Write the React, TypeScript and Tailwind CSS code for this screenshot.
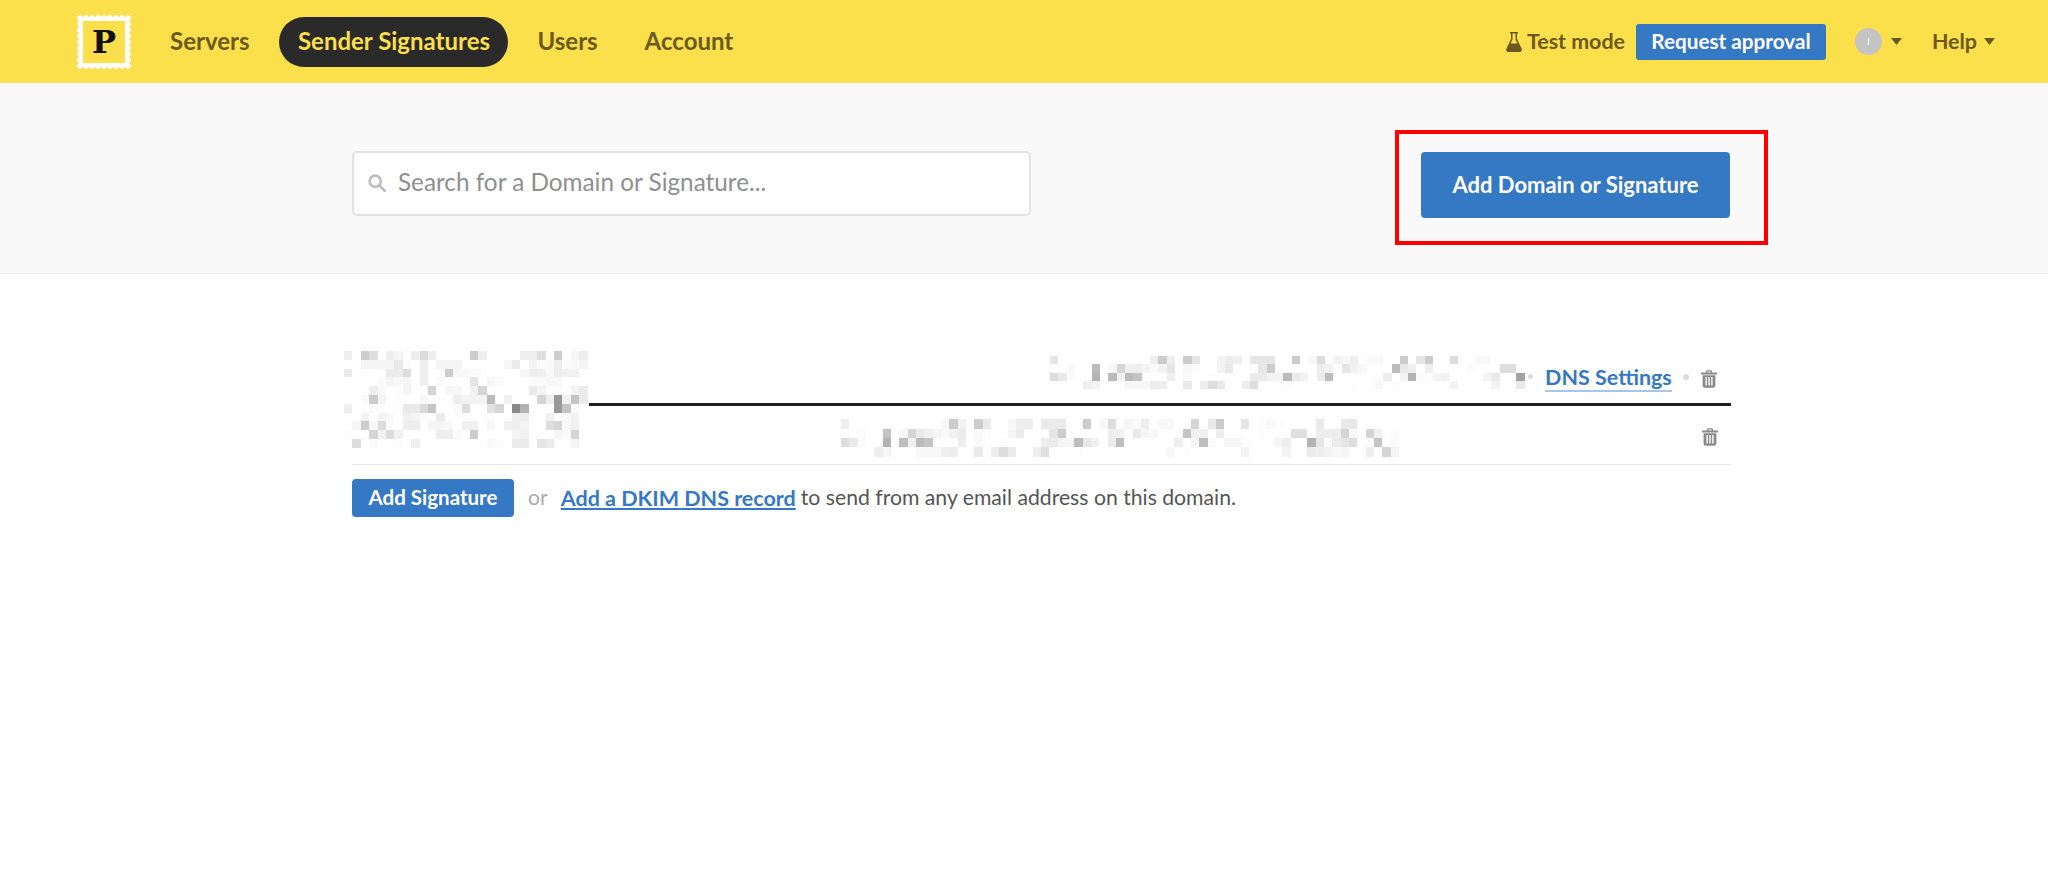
import React from "react";

type Rows = number[][];

const m3: Rows = [
  [0,1,2,3,3,2,5,1,6,.6,8,1,9,2,10,1,15,3,16,1,21,1,22,1,23,2,25,3,27,.5,28,1],
  [2,.6,3,.6,4,.6,5,.6,6,1.3,7,.1,9,.8,11,.6,12,.6,13,.6,19,.5,20,1.2,22,.7,23,.2,24,.3,25,1,26,.2,27,.3,28,.6],
  [0,1.2,2,.1,5,1.2,6,1.2,7,2,9,.8,12,3,13,.4,14,.4,15,.2,16,.2,21,.4,22,1,23,.9,24,.4,25,1,26,.8,27,.8],
  [4,.3,5,.7,6,.4,7,.6,9,.8,11,.3,15,1.5,17,.5,18,.2,22,.3,23,.3,24,.5,25,.4],
  [3,1,4,.4,7,.6,10,2.5,12,.5,13,.4,15,.8,16,2.5,22,1.2,23,.7,25,.2,27,.7,28,1.2],
  [2,.3,3,3,4,.6,6,.1,9,.4,13,1,14,.7,15,.7,16,.7,17,4,19,.8,23,2.5,24,1,25,6,26,.8,27,3.5,28,1.2],
  [0,1,3,.3,7,1.3,8,1.3,9,2.2,10,3.5,13,.3,14,2,17,1.7,18,2.5,20,7,21,4.5,25,6,26,3.5],
  [2,.7,4,.7,5,.4,7,.8,8,.6,9,.3,11,1.2,20,1,21,1,24,.9,26,.5,27,.7],
  [1,.6,2,3,3,.5,4,2,7,1,8,1,10,.6,11,.6,12,.4,14,.8,15,.8,17,.5,19,.8,20,1,21,.7,24,2,25,2.5,26,.4,27,.9],
  [0,.1,3,2.5,4,.8,5,2,6,.8,11,1,12,1,13,.3,15,3,20,.6,21,.8,25,.6,26,.3,27,2.5],
  [1,2,3,.2,5,.1,6,.1,8,.8,17,.3,18,.2,20,1.2,21,1.2,23,1.6,24,1.2,27,.6],
];

const m1: Rows = [
  [0,1.5,12,1,13,3,14,1,16,3,17,1.5,20,.7,21,1,22,1,24,1.5,25,1.5,26,1.5,29,3,31,.5,32,2,34,.7,35,.5,36,1,38,.3,39,.5,42,3,44,1.5,45,3,48,2,51,.5,52,.5],
  [2,.3,5,4,7,.5,8,2.5,9,1,10,1,11,.7,12,.3,13,.7,14,1.5,16,.5,17,.2,20,.7,21,1.3,25,1.5,26,3,32,1,33,.8,35,1.5,36,.8,37,.4,41,4,42,1.3,43,1,45,1,50,.2,54,2,55,2],
  [0,2,1,1.3,2,.2,5,4.5,7,4,8,.8,9,4,10,3.5,14,1,16,.4,19,.1,24,1.2,25,1.2,26,.7,27,.7,28,4,29,1.2,30,.8,32,1.2,33,4,40,1,42,.7,43,4.5,44,.3,46,.6,47,.7,52,.7,53,1.2,56,5.5],
  [4,1,5,.7,9,.5,10,.5,11,.5,12,1,13,1,16,1.3,18,1,19,2,20,1.3,23,1,24,2,28,.1,36,.1,39,.5,41,.1,48,.7,53,.7,56,1.3],
];

const m2: Rows = [
  [0,1,12,.4,13,3,14,.8,16,3,17,1.3,20,.5,21,1,22,1,24,1.3,25,1.2,26,1.2,29,3,31,.5,32,2,34,.6,35,.3,36,1,37,.1,38,.4,39,.4,42,2.5,44,1.3,45,3,48,1.5,50,.1,51,.3,52,.2,57,1.2,60,1.3,61,1.5],
  [2,.2,5,3.5,7,.5,8,2.5,9,1.2,10,.8,11,.6,12,.3,13,.8,14,1.2,16,.3,17,.2,20,.6,21,1.2,25,1.5,26,3,32,1,33,.8,35,1.3,36,.6,37,.4,41,3.5,42,.9,43,.8,45,1,50,.1,54,1.8,55,1.8,57,1,58,1,59,1,60,2.5,61,.4,63,2.5,64,.8,66,.2],
  [0,2,1,1.2,2,.2,5,4.5,7,3.8,8,.8,9,4,10,3.5,14,1,16,.3,19,.1,24,1,25,1.2,26,.6,27,.6,28,3.8,29,1.4,30,.8,32,1.2,33,3.8,40,1,42,.6,43,3.8,44,.2,46,.6,47,.6,52,.6,53,1,56,4.5,57,1.5,58,.3,59,1.2,60,1.5,61,2,64,3.5,66,.3],
  [4,1,5,.6,9,.4,10,.4,11,.4,12,.9,13,1,16,1.2,18,1,19,2,20,1.2,23,1,24,1.8,28,.1,39,.5,41,.1,48,.7,53,.7,56,1.2,57,1,58,.7,59,.5,60,.6,63,1,65,2.5,66,.6],
];

function Mosaic({ rows, cols, cw, ch, className }: { rows: Rows; cols: number; cw: number; ch: number; className?: string }) {
  const w = cols * cw;
  const h = rows.length * ch;
  const cells: React.ReactNode[] = [];
  rows.forEach((r, y) => {
    for (let i = 0; i < r.length; i += 2) {
      const g = Math.round(255 - r[i + 1] * 17);
      cells.push(
        <rect key={`${y}-${i}`} x={r[i] * cw} y={y * ch} width={cw} height={ch} fill={`rgb(${g},${g},${g})`} />
      );
    }
  });
  return (
    <svg width={w} height={h} viewBox={`0 0 ${w} ${h}`} className={className} shapeRendering="crispEdges">
      {cells}
    </svg>
  );
}

function Stamp() {
  const n = 9;
  const step = 54 / n;
  const dots: React.ReactNode[] = [];
  for (let i = 0; i <= n; i++) {
    const p = i * step;
    dots.push(<circle key={`t${i}`} cx={p} cy={0} r={1.7} fill="#fbdf4b" />);
    dots.push(<circle key={`b${i}`} cx={p} cy={54} r={1.7} fill="#fbdf4b" />);
    dots.push(<circle key={`l${i}`} cx={0} cy={p} r={1.7} fill="#fbdf4b" />);
    dots.push(<circle key={`r${i}`} cx={54} cy={p} r={1.7} fill="#fbdf4b" />);
  }
  return (
    <svg width="54" height="54" viewBox="0 0 54 54" className="block">
      <rect width="54" height="54" fill="#fff" />
      {dots}
      <rect x="6" y="6" width="42" height="42" fill="#fbdf4b" />
    </svg>
  );
}

function Caret({ className }: { className?: string }) {
  return (
    <svg width="11" height="7" viewBox="0 0 11 7" className={className}>
      <path d="M0 0h11L5.5 7z" fill="#6b5a1f" />
    </svg>
  );
}

function Trash({ className }: { className?: string }) {
  return (
    <svg width="18" height="18" viewBox="0 0 18 18" className={className} fill="#8a8a8a">
      <path d="M6 3V1.6C6 .8 6.6.2 7.4.2h3.2c.8 0 1.4.6 1.4 1.4V3h-1.4V1.5H7.4V3z" />
      <rect x="1" y="2.6" width="16" height="2" rx=".6" />
      <path fillRule="evenodd" d="M2.6 5.2h12.8v10.4c0 1.2-.9 2.2-2.1 2.2H4.7c-1.2 0-2.1-1-2.1-2.2zM5.4 7v8.6h1.4V7zm2.9 0v8.6h1.4V7zm2.9 0v8.6h1.4V7z" />
    </svg>
  );
}

export default function App() {
  return (
    <div className="min-h-[893px] bg-white font-['Lato','Liberation_Sans',sans-serif]">
      <header className="flex h-[83px] items-center bg-[#fbdf4b] text-[24px] font-bold text-[#6b5a1f]">
        <div className="ml-[77px]">
          <div className="relative">
            <Stamp />
            <span className="absolute inset-0 flex items-center justify-center font-['DejaVu_Serif',serif] text-[32px] leading-none font-bold text-[#111]">
              P
            </span>
          </div>
        </div>
        <a className="ml-[39px] -translate-y-px">Servers</a>
        <a className="ml-[30px] flex h-[50px] w-[229px] items-center justify-center rounded-[25px] bg-[#2a2a2a] pb-[2px] text-[#fbdf4b]">
          Sender Signatures
        </a>
        <a className="ml-[29px] -translate-y-px">Users</a>
        <a className="ml-[47px] -translate-y-px">Account</a>

        <div className="ml-auto flex items-center text-[21.4px]">
          <svg width="16" height="20" viewBox="0 0 16 20" fill="#6b5a1f">
            <path d="M4 0h8v1.6h-1V7l4.6 9.6c.7 1.5-.2 3.4-2 3.4H2.4c-1.8 0-2.7-1.9-2-3.4L5 7V1.6H4zM6.5 1.6v5.8L4.6 11.5h6.8L9.5 7.4V1.6z" />
          </svg>
          <span className="ml-[5px]">Test mode</span>
          <a className="ml-[11px] flex h-[36px] w-[190px] items-center justify-center rounded-[3px] bg-[#3578c3] text-[20.7px] text-white">
            Request approval
          </a>
          <span className="ml-[29px] flex h-[27px] w-[27px] items-center justify-center rounded-full bg-[#c4c4c4] text-[10px] font-normal text-white">
            I
          </span>
          <Caret className="ml-[9px]" />
          <span className="ml-[30px]">Help</span>
          <Caret className="mr-[53px] ml-[7px]" />
        </div>
      </header>

      <section className="flex h-[191px] items-start border-b border-[#ebebeb] bg-[#f9f9f9] pt-[69px]">
        <div className="-mt-px ml-[352px] flex h-[65px] w-[679px] items-center rounded-[5px] border-2 border-[#e3e3e3] bg-white pb-[2px] pl-[14px]">
          <svg width="18" height="18" viewBox="0 0 18 18" fill="none" stroke="#bdbdbd" strokeWidth="2.6">
            <circle cx="7.2" cy="7.2" r="5.6" />
            <path d="M11.4 11.4L16.8 17" strokeLinecap="round" />
          </svg>
          <span className="ml-[12px] text-[24.3px] text-[#8f8f8f]">Search for a Domain or Signature...</span>
        </div>
        <div className="relative ml-[390px]">
          <a className="flex h-[66px] w-[309px] items-center justify-center rounded-[4px] bg-[#3578c3] pb-[2px] text-[22px] font-bold text-white">
            Add Domain or Signature
          </a>
          <div className="absolute -top-[22px] -right-[38px] -bottom-[27px] -left-[26px] border-4 border-[#ff0000]" />
        </div>
      </section>

      <main className="ml-[352px] w-[1379px] pt-[77px]">
        <div className="flex border-b border-[#e8e8e8]">
          <Mosaic rows={m3} cols={29.2} cw={8.4} ch={8.8} className="-ml-2 block shrink-0" />
          <div className="flex-1">
            <div className="flex h-[55px] items-start border-b-[3px] border-[#1f1f1f] pt-[5px]">
              <Mosaic rows={m1} cols={57} cw={8.33} ch={8.33} className="ml-[461px] block shrink-0" />
              <span className="mt-[18px] ml-[3px] h-[5px] w-[5px] rounded-full bg-[#dcdcdc]" />
              <a className="mt-[8px] ml-[12px] border-b-2 border-[#a5c6e8] text-[21.5px] leading-[26px] font-bold text-[#3578c3]">
                DNS Settings
              </a>
              <span className="mt-[18px] ml-[11px] h-[6px] w-[6px] rounded-full bg-[#dcdcdc]" />
              <Trash className="mt-[14px] ml-[11px]" />
            </div>
            <div className="flex h-[58px] items-start">
              <Mosaic rows={m2} cols={67} cw={8.33} ch={9.5} className="mt-[13px] ml-[252px] block shrink-0" />
              <Trash className="mt-[22px] mr-[12px] ml-auto" />
            </div>
          </div>
        </div>

        <div className="mt-[14px] flex items-center text-[21.2px]">
          <a className="flex h-[38px] w-[162px] items-center justify-center rounded-[4px] bg-[#3578c3] pb-[1px] text-[20.5px] font-bold text-white">
            Add Signature
          </a>
          <span className="ml-[14px] text-[#aaaaaa]">or</span>
          <a className="ml-[13px] text-[21.5px] font-bold text-[#3578c3] underline decoration-2 underline-offset-2">Add a DKIM DNS record</a>
          <span className="ml-[5px] text-[#555555]">to send from any email address on this domain.</span>
        </div>
      </main>
    </div>
  );
}
